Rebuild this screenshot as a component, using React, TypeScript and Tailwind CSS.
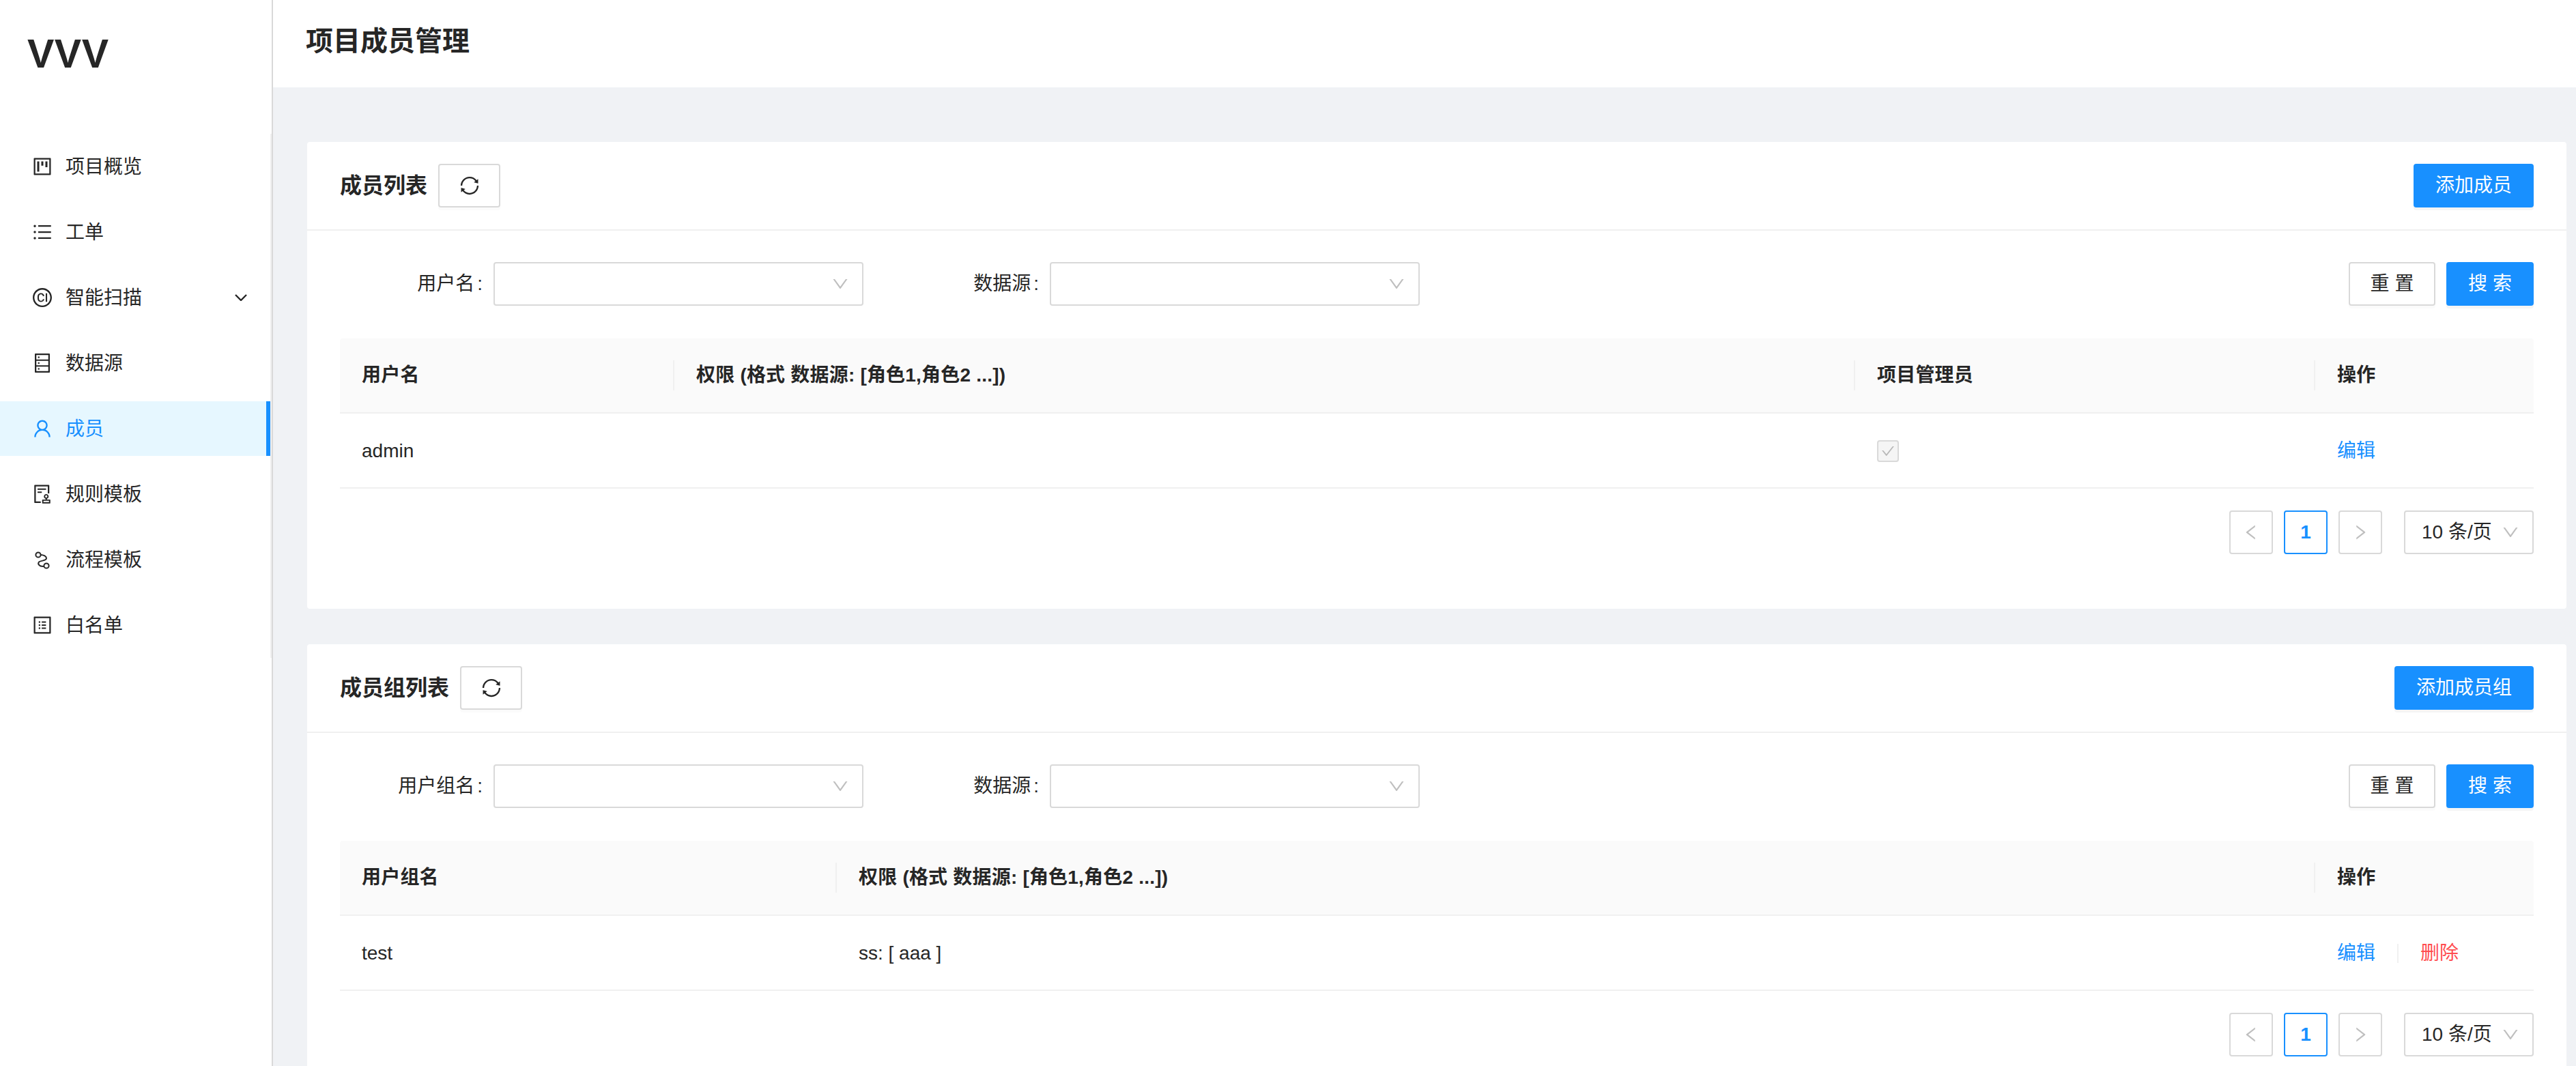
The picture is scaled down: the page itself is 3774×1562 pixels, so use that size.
import React from 'react';
import {
  AiOutlineProject,
  AiOutlineBars,
  AiOutlineCi,
  AiOutlineDatabase,
  AiOutlineUser,
  AiOutlineAudit,
  AiOutlineProfile,
  AiOutlineSync,
  AiOutlineDown,
  AiOutlineLeft,
  AiOutlineRight,
  AiOutlineCheck,
} from 'react-icons/ai';

const FlowIcon = () => (
  <svg width="32" height="32" viewBox="0 0 32 32" fill="none" stroke="currentColor" strokeWidth="2">
    <circle cx="10" cy="9" r="3.6" />
    <circle cx="22" cy="25" r="3.6" />
    <path d="M13.5 9C18 9 22 11 22 14c0 4-8 3-11 5.5C9 22 11 26.5 18.5 26" />
  </svg>
);

const menu = [
  { label: '项目概览', icon: <AiOutlineProject size={32} /> },
  { label: '工单', icon: <AiOutlineBars size={32} /> },
  { label: '智能扫描', icon: <AiOutlineCi size={32} />, arrow: true },
  { label: '数据源', icon: <AiOutlineDatabase size={32} /> },
  { label: '成员', icon: <AiOutlineUser size={32} />, active: true },
  { label: '规则模板', icon: <AiOutlineAudit size={32} /> },
  { label: '流程模板', icon: <FlowIcon /> },
  { label: '白名单', icon: <AiOutlineProfile size={32} /> },
];

const Sidebar = () => (
  <aside className="w-[400px] shrink-0 bg-white border-r-2 border-[#d9d9d9]">
    <div className="h-[196px] pl-[40px] pt-[46px] text-[59px] leading-[66px] font-bold tracking-[0.5px] text-[#262626]">VVV</div>
    <ul className="border-r-2 border-[#f0f0f0] py-2 flex flex-col gap-4">
      {menu.map((item) => (
        <li
          key={item.label}
          className={
            item.active
              ? 'h-20 flex items-center pl-[46px] gap-[18px] text-[28px] bg-[#e6f7ff] text-[#1890ff] border-r-[6px] border-[#1890ff]'
              : 'h-20 flex items-center pl-[46px] gap-[18px] text-[28px] text-[#262626]'
          }
        >
          {item.icon}
          <span className="flex-1 pt-[2px]">{item.label}</span>
          {item.arrow && (
            <svg className="mr-[34px]" width="18" height="10" viewBox="0 0 18 10" fill="none" stroke="#262626" strokeWidth="2.4">
              <path d="M1 1l8 8 8-8" />
            </svg>
          )}
        </li>
      ))}
    </ul>
  </aside>
);

const Select = () => (
  <div className="w-[542px] h-16 bg-white border-2 border-[#d9d9d9] rounded flex items-center justify-end pr-[18px] text-[#bfbfbf]">
    <AiOutlineDown size={28} />
  </div>
);

const Pagination = () => (
  <div className="flex justify-end items-center mt-8 text-[28px] text-[#262626]">
    <div className="w-16 h-16 border-2 border-[#d9d9d9] rounded flex items-center justify-center text-[#bfbfbf]">
      <AiOutlineLeft size={28} />
    </div>
    <div className="w-16 h-16 ml-4 border-2 border-[#1890ff] rounded flex items-center justify-center font-semibold text-[#1890ff]">
      1
    </div>
    <div className="w-16 h-16 ml-4 border-2 border-[#d9d9d9] rounded flex items-center justify-center text-[#bfbfbf]">
      <AiOutlineRight size={28} />
    </div>
    <div className="w-[190px] h-16 ml-8 pl-6 pr-[18px] border-2 border-[#d9d9d9] rounded flex items-center justify-between">
      <span className="whitespace-nowrap">10 条/页</span>
      <span className="text-[#bfbfbf]">
        <AiOutlineDown size={28} />
      </span>
    </div>
  </div>
);

type Column = { title: string; width: string };

const HeaderRow = ({ columns }: { columns: Column[] }) => (
  <div className="flex h-[110px] items-center bg-[#fafafa] border-b-2 border-[#f0f0f0] rounded-t font-semibold tracking-[0.2px]">
    {columns.map((col, i) => (
      <div key={col.title} className={`${col.width} relative px-8 whitespace-nowrap`}>
        {i > 0 && <span className="absolute left-[-2px] top-1/2 -translate-y-1/2 w-0.5 h-11 bg-[#f0f0f0]" />}
        {col.title}
      </div>
    ))}
  </div>
);

type SectionProps = {
  title: string;
  addLabel: string;
  filterLabel: string;
  children: React.ReactNode;
};

const FilterLabel = ({ text, width }: { text: string; width: string }) => (
  <label className={`${width} text-right whitespace-nowrap`}>
    {text}
    <span className="ml-1 mr-4">:</span>
  </label>
);

const Section = ({ title, addLabel, filterLabel, children }: SectionProps) => (
  <section className="bg-white rounded h-[684px] shrink-0 text-[28px] text-[#262626]">
    <div className="h-[130px] border-b-2 border-[#f0f0f0] px-[48px] flex items-center">
      <h2 className="text-[32px] font-semibold mr-4">{title}</h2>
      <button className="w-[91px] h-16 border-2 border-[#d9d9d9] rounded flex items-center justify-center shadow-[0_4px_0_rgba(0,0,0,0.015)]">
        <AiOutlineSync size={32} />
      </button>
      <button className="ml-auto h-16 px-8 rounded bg-[#1890ff] text-white shadow-[0_4px_0_rgba(0,0,0,0.04)]">
        {addLabel}
      </button>
    </div>
    <div className="px-[48px] pt-[46px]">
      <div className="flex items-center h-16">
        <FilterLabel text={filterLabel} width="w-[225px]" />
        <Select />
        <FilterLabel text="数据源" width="w-[273px]" />
        <Select />
        <button className="ml-auto w-[127px] h-16 border-2 border-[#d9d9d9] rounded shadow-[0_4px_0_rgba(0,0,0,0.015)]">重 置</button>
        <button className="ml-4 w-[128px] h-16 rounded bg-[#1890ff] text-white shadow-[0_4px_0_rgba(0,0,0,0.04)]">搜 索</button>
      </div>
      <div className="mt-12">
        {children}
        <Pagination />
      </div>
    </div>
  </section>
);

export default function App() {
  return (
    <div className="flex h-[1562px] w-[3774px] overflow-hidden bg-[#f0f2f5] font-['Liberation_Sans','Noto_Sans_CJK_SC',sans-serif]">
      <Sidebar />
      <main className="flex-1 min-w-0 flex flex-col">
        <header className="h-[128px] shrink-0 bg-white pl-12 pt-[36px] text-[40px] leading-[48px] font-semibold text-[#262626]">
          项目成员管理
        </header>
        <div className="pt-20 pl-[50px] pr-[14px] flex flex-col gap-[52px]">
          <Section title="成员列表" addLabel="添加成员" filterLabel="用户名">
            <HeaderRow
              columns={[
                { title: '用户名', width: 'w-[490px]' },
                { title: '权限 (格式 数据源: [角色1,角色2 ...])', width: 'w-[1730px]' },
                { title: '项目管理员', width: 'w-[674px]' },
                { title: '操作', width: 'w-[320px]' },
              ]}
            />
            <div className="flex h-[110px] pt-[2px] items-center border-b-2 border-[#f0f0f0]">
              <div className="w-[490px] px-8">admin</div>
              <div className="w-[1730px] px-8"></div>
              <div className="w-[674px] px-8">
                <span className="w-8 h-8 rounded border-2 border-[#d9d9d9] bg-[#f5f5f5] flex items-center justify-center text-[#b8b8b8]">
                  <AiOutlineCheck size={22} />
                </span>
              </div>
              <div className="w-[320px] px-8 text-[#1890ff]">编辑</div>
            </div>
          </Section>
          <Section title="成员组列表" addLabel="添加成员组" filterLabel="用户组名">
            <HeaderRow
              columns={[
                { title: '用户组名', width: 'w-[728px]' },
                { title: '权限 (格式 数据源: [角色1,角色2 ...])', width: 'w-[2166px]' },
                { title: '操作', width: 'w-[320px]' },
              ]}
            />
            <div className="flex h-[110px] pt-[2px] items-center border-b-2 border-[#f0f0f0]">
              <div className="w-[728px] px-8">test</div>
              <div className="w-[2166px] px-8">ss: [ aaa ]</div>
              <div className="w-[320px] px-8 flex items-center">
                <span className="text-[#1890ff]">编辑</span>
                <span className="w-0.5 h-7 mx-8 bg-[#f0f0f0]" />
                <span className="text-[#ff4d4f]">删除</span>
              </div>
            </div>
          </Section>
        </div>
      </main>
    </div>
  );
}
